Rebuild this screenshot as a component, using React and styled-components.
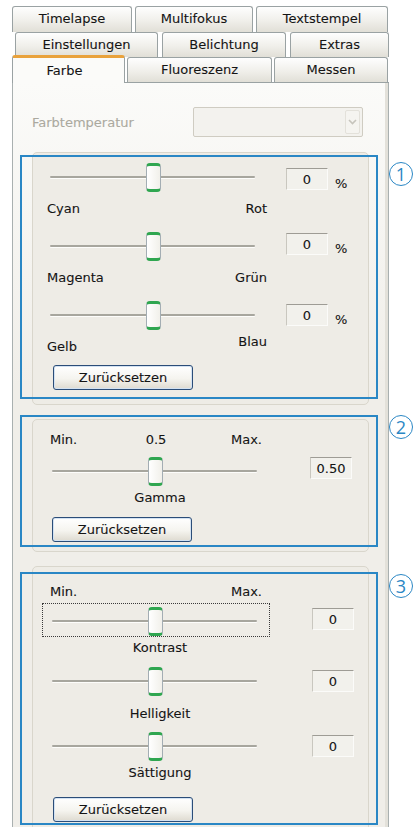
import React from 'react';
import styled, { createGlobalStyle } from 'styled-components';

const GlobalStyle = createGlobalStyle`
    html, body {
        margin: 0;
        padding: 0;
        background: #fff;
        overflow: hidden;
    }
    body {
        font-family: "DejaVu Sans", Verdana, sans-serif;
        font-size: 13px;
        color: #141414;
        -webkit-text-stroke: 0.1px currentColor;
    }
`;

const Page = styled.div`
    width: 377px;
    padding: 6px 0 0 12px;
`;

const TabRow = styled.div`
    display: flex;
    align-items: flex-end;
    gap: ${(p) => p.gap}px;
    padding-left: ${(p) => p.indent || 0}px;
    border-bottom: ${(p) => (p.base ? '1px solid #9aa2a3' : 'none')};
`;

const Tab = styled.div`
    box-sizing: border-box;
    flex: none;
    width: ${(p) => p.w}px;
    height: ${(p) => p.h || 25}px;
    display: flex;
    align-items: center;
    justify-content: center;
    padding-bottom: 2px;
    border: 1px solid #9aa2a3;
    border-bottom: none;
    border-radius: 3px 3px 0 0;
    background: linear-gradient(#fefefe, #f0efea 55%, #e1dfd7);
`;

const ActiveTab = styled(Tab)`
    position: relative;
    height: 28px;
    margin-top: -2px;
    margin-bottom: -1px;
    padding: 0 8px 0 0;
    border-top: 3px solid #e9a23c;
    background: #fbfbf9;
`;

const Panel = styled.div`
    box-sizing: border-box;
    min-height: 760px;
    padding: 24px 19px 0 19px;
    border-left: 1px solid #a9b0b0;
    border-right: 1px solid #a9b0b0;
    background: linear-gradient(#fbfbf9, #f0eee9 40%);
    box-shadow: inset -3px 0 0 #e3e1da;
`;

const FieldRow = styled.div`
    display: flex;
    align-items: center;
    height: 30px;
`;

const FieldLabel = styled.span`
    width: 161px;
    color: #aba99f;
`;

const Combo = styled.div`
    box-sizing: border-box;
    width: 170px;
    height: 30px;
    display: flex;
    justify-content: flex-end;
    align-items: center;
    padding-right: 2px;
    border: 1px solid #cfccc2;
    border-radius: 2px;
    background: #f3f2ee;
`;

const ComboButton = styled.div`
    box-sizing: border-box;
    width: 15px;
    height: 24px;
    display: flex;
    align-items: center;
    justify-content: center;
    border: 1px solid #e3e1da;
    border-radius: 2px;
    background: #f5f4f0;
`;

const GroupBox = styled.div`
    position: relative;
    margin-top: ${(p) => p.mt}px;
    padding: ${(p) => p.pt}px 0 ${(p) => p.pb}px ${(p) => p.inset}px;
    border: 1px solid #d9d6cc;
    border-radius: 5px;
    background: #eeece6;
`;

const Callout = styled.div`
    position: absolute;
    top: ${(p) => p.top}px;
    bottom: ${(p) => p.bottom}px;
    left: -13px;
    right: -10px;
    border: 2px solid #2a87c5;
    pointer-events: none;
`;

const CalloutNumber = styled.span`
    position: absolute;
    top: ${(p) => p.top}px;
    left: calc(100% + 13px);
    box-sizing: border-box;
    width: 24px;
    height: 24px;
    display: flex;
    align-items: center;
    justify-content: center;
    border: 1.5px solid #2a87c5;
    border-radius: 50%;
    color: #2a87c5;
    font-family: "Open Sans", "DejaVu Sans", sans-serif;
    font-weight: 400;
    font-size: 18px;
    line-height: 1;
    -webkit-text-stroke: 0;
`;

const SliderRow = styled.div`
    display: flex;
    align-items: flex-start;
    margin-top: ${(p) => p.mt || 0}px;
`;

const SliderBox = styled.div`
    position: relative;
    flex: none;
    box-sizing: border-box;
    width: 228px;
    height: 34px;
    border: 1px dotted ${(p) => (p.focused ? '#3a3a3a' : 'transparent')};
`;

const Track = styled.div`
    position: absolute;
    left: 9px;
    right: 12px;
    top: 16px;
    height: 2px;
    border-radius: 1px;
    background: #a7a69e;
    box-shadow: 0 1px 0 #fdfdfb;
`;

const Thumb = styled.div`
    position: absolute;
    top: 3px;
    left: calc(50% - 8px);
    box-sizing: border-box;
    width: 15px;
    height: 29px;
    border: 1px solid #a3adb3;
    border-top: 3px solid #2fa650;
    border-bottom: 3px solid #2fa650;
    border-radius: 4px;
    background: linear-gradient(to right, #ffffff, #f1f0ea);
`;

const ValueBox = styled.div`
    flex: none;
    box-sizing: border-box;
    width: 42px;
    height: 22px;
    margin-top: ${(p) => p.offset}px;
    margin-left: ${(p) => p.gap}px;
    display: flex;
    align-items: center;
    justify-content: center;
    border-top: 1px solid #9e9c95;
    border-left: 1px solid #c9c7bf;
    border-right: 1px solid #fbfbf9;
    border-bottom: 1px solid #fbfbf9;
    background: #f2f1ec;
`;

const Unit = styled.span`
    margin: ${(p) => p.offset + 8}px 0 0 7px;
`;

const EndLabels = styled.div`
    display: flex;
    justify-content: space-between;
    align-items: flex-start;
    width: 220px;
    height: 16px;
    line-height: 16px;
    margin: 8px 0 0 7px;
`;

const EndLabel = styled.span`
    margin-top: ${(p) => (p.raise ? -p.raise : 0)}px;
`;

const ScaleLabels = styled.div`
    display: grid;
    grid-template-columns: 1fr auto 1fr;
    width: 212px;
    height: 16px;
    line-height: 16px;
    margin-left: 8px;
`;

const ScaleMax = styled.span`
    grid-column: 3;
    justify-self: end;
`;

const CenterLabel = styled.div`
    width: 228px;
    padding-left: 8px;
    box-sizing: border-box;
    height: 16px;
    line-height: 16px;
    text-align: center;
    margin-top: ${(p) => p.mt}px;
`;

const ResetButton = styled.button`
    display: block;
    box-sizing: border-box;
    width: 140px;
    height: 25px;
    margin: ${(p) => p.mt}px 0 0 ${(p) => p.ml}px;
    padding: 0 0 1px;
    font: inherit;
    color: #141414;
    border: 1px solid #2b4d78;
    border-radius: 3px;
    background: linear-gradient(#ffffff, #f5f4ef 55%, #dedad0);
    box-shadow: inset 0 0 0 1px #d3e2f2;
`;

function Slider({ focused }) {
    return (
        <SliderBox focused={focused}>
            <Track />
            <Thumb />
        </SliderBox>
    );
}

function Chevron() {
    return (
        <svg width="9" height="6" viewBox="0 0 9 6">
            <path d="M1 1l3.5 3.5L8 1" fill="none" stroke="#c6c4bc" strokeWidth="1.6" />
        </svg>
    );
}

const colorRows = [
    { left: 'Cyan', right: 'Rot', off: 9, mt: 0 },
    { left: 'Magenta', right: 'Grün', off: 5, mt: 11 },
    { left: 'Gelb', right: 'Blau', off: 7, mt: 11, raise: 5 },
];

const toneRows = [
    { label: 'Kontrast', focused: true, mt: 3, off: 5, labelMt: 3 },
    { label: 'Helligkeit', mt: 7, off: 7, labelMt: 9 },
    { label: 'Sättigung', mt: 6, off: 7, labelMt: 3 },
];

export default function App() {
    return (
        <Page>
            <GlobalStyle />
            <TabRow gap={3}>
                <Tab w={120} h={26}>Timelapse</Tab>
                <Tab w={118} h={26}>Multifokus</Tab>
                <Tab w={132} h={26}>Textstempel</Tab>
            </TabRow>
            <TabRow gap={4} indent={3}>
                <Tab w={143}>Einstellungen</Tab>
                <Tab w={124}>Belichtung</Tab>
                <Tab w={99}>Extras</Tab>
            </TabRow>
            <TabRow gap={2} base>
                <ActiveTab w={113}>Farbe</ActiveTab>
                <Tab w={145}>Fluoreszenz</Tab>
                <Tab w={114}>Messen</Tab>
            </TabRow>
            <Panel>
                <FieldRow>
                    <FieldLabel>Farbtemperatur</FieldLabel>
                    <Combo>
                        <ComboButton>
                            <Chevron />
                        </ComboButton>
                    </Combo>
                </FieldRow>

                <GroupBox mt={15} pt={6} pb={14} inset={7}>
                    {colorRows.map((row) => (
                        <React.Fragment key={row.left}>
                            <SliderRow mt={row.mt}>
                                <Slider />
                                <ValueBox offset={row.off} gap={18}>0</ValueBox>
                                <Unit offset={row.off}>%</Unit>
                            </SliderRow>
                            <EndLabels>
                                <EndLabel>{row.left}</EndLabel>
                                <EndLabel raise={row.raise}>{row.right}</EndLabel>
                            </EndLabels>
                        </React.Fragment>
                    ))}
                    <ResetButton mt={10} ml={13}>Zurücksetzen</ResetButton>
                    <Callout top={2} bottom={5}>
                        <CalloutNumber top={5}>1</CalloutNumber>
                    </Callout>
                </GroupBox>

                <GroupBox mt={14} pt={12} pb={9} inset={9}>
                    <ScaleLabels>
                        <span>Min.</span>
                        <span>0.5</span>
                        <ScaleMax>Max.</ScaleMax>
                    </ScaleLabels>
                    <SliderRow mt={5}>
                        <Slider />
                        <ValueBox offset={4} gap={40}>0.50</ValueBox>
                    </SliderRow>
                    <CenterLabel mt={3}>Gamma</CenterLabel>
                    <ResetButton mt={11} ml={10}>Zurücksetzen</ResetButton>
                    <Callout top={-5} bottom={4}>
                        <CalloutNumber top={-2}>2</CalloutNumber>
                    </Callout>
                </GroupBox>

                <GroupBox mt={14} pt={17} pb={12} inset={9}>
                    <ScaleLabels>
                        <span>Min.</span>
                        <ScaleMax>Max.</ScaleMax>
                    </ScaleLabels>
                    {toneRows.map((row) => (
                        <React.Fragment key={row.label}>
                            <SliderRow mt={row.mt}>
                                <Slider focused={row.focused} />
                                <ValueBox offset={row.off} gap={42}>0</ValueBox>
                            </SliderRow>
                            <CenterLabel mt={row.labelMt}>{row.label}</CenterLabel>
                        </React.Fragment>
                    ))}
                    <ResetButton mt={16} ml={11}>Zurücksetzen</ResetButton>
                    <Callout top={5} bottom={9}>
                        <CalloutNumber top={0}>3</CalloutNumber>
                    </Callout>
                </GroupBox>
            </Panel>
        </Page>
    );
}
